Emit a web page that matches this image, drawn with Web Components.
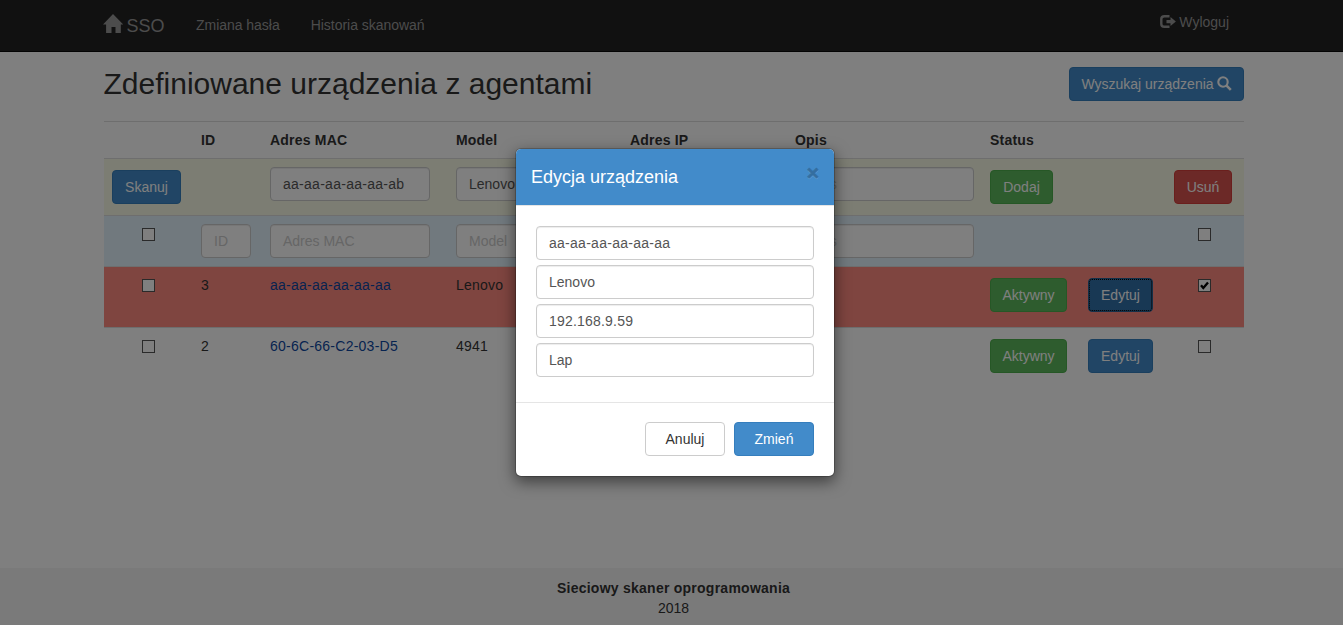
<!DOCTYPE html>
<html lang="pl">
<head>
<meta charset="utf-8">
<title>SSO</title>
<style>
html, body { margin: 0; height: 100%; }
body { background: #fff; overflow: hidden; }
</style>
</head>
<body>
<sso-app></sso-app>
<script>
const define = (name, html) => {
  const t = document.createElement('template');
  t.innerHTML = html;
  customElements.define(name, class extends HTMLElement {
    constructor() {
      super();
      this.attachShadow({ mode: 'open' }).appendChild(t.content.cloneNode(true));
    }
  });
};

define('sso-button', `
<style>
:host { display: flex; box-sizing: border-box; height: 34px; align-items: center; justify-content: center;
  border: 1px solid #357ebd; border-radius: 4px; background: #428bca; color: #fff; font-size: 14px; line-height: 20px; white-space: nowrap; }
:host([kind=success]) { background: #5cb85c; border-color: #4cae4c; }
:host([kind=danger]) { background: #d9534f; border-color: #d43f3a; }
:host([kind=default]) { background: #fff; border-color: #ccc; color: #333; }
:host([focused]) { background: #3071a9; border-color: #285e8e; outline: 1px dotted #000; outline-offset: -2px; }
</style><slot></slot>`);

define('sso-field', `
<style>
:host { display: block; box-sizing: border-box; height: 34px; padding: 6px 12px; border: 1px solid #ccc; border-radius: 4px;
  background: #fff; box-shadow: inset 0 1px 1px rgba(0,0,0,.075); color: #555; font-size: 14px; line-height: 20px;
  white-space: nowrap; overflow: hidden; }
:host([empty]) { color: #ccc; }
:host([mac]) { letter-spacing: .27px; }
:host([ip]) { letter-spacing: .2px; }
</style><slot></slot>`);

define('sso-check', `
<style>
:host { display: block; box-sizing: border-box; width: 13px; height: 13px; border: 1px solid #555; background: #fff; margin-top: 4px; }
svg { display: none; width: 11px; height: 11px; }
:host([checked]) svg { display: block; }
</style><svg viewBox="0 0 11 11"><path d="M2 5.2 4.3 8 9 2.4" fill="none" stroke="#000" stroke-width="2.3"/></svg>`);

define('sso-row', `
<style>
:host { display: grid; box-sizing: border-box; grid-template-columns: 89px 69px 186px 174px 165px 195px 98px 86px 78px;
  border-top: 1px solid #ddd; padding-top: 8px; line-height: 20px; align-items: start; }
:host([kind=head]) { height: 37px; font-weight: bold; letter-spacing: .2px; }
:host([kind=add]) { height: 57px; background: #f9fbe7; }
:host([kind=filter]) { height: 51px; background: #e3f2fd; }
:host([kind=missing]) { height: 61px; background: #ff8a80; }
::slotted(*) { margin-left: 8px; }
::slotted(span) { letter-spacing: .2px; }
::slotted(sso-button) { margin-top: 3px; justify-self: start; }
::slotted(sso-check) { margin-left: 38px; }
::slotted(sso-check.end) { margin-left: 32px; }
::slotted(a) { color: #0d47a1; letter-spacing: .25px; }
</style><slot></slot>`);

define('sso-navbar', `
<style>
:host { display: flex; box-sizing: border-box; height: 52px; background: #222; border-bottom: 1px solid #080808; color: #999; padding: 0 114px 0 103px; }
.brand { display: flex; font-size: 18px; line-height: 20px; padding-top: 14px; width: 93px; }
.brand svg { width: 20px; height: 20px; margin-right: 3.500px; }
.brand span { padding-top: 2px; }
.link { padding-top: 15px; margin-right: 31px; line-height: 20px; letter-spacing: -.03px; }
.out { margin-left: auto; padding-top: 12px; display: flex; line-height: 20px; }
.out svg { width: 16px; height: 14px; margin: 3px 3px 0 0; }
</style>
<div class="brand"><svg viewBox="0 0 20 20"><path fill="#999" d="M10 0 0 10.500h3.100V19h5.400v-6h4v6h5.300v-8.500H20.200z"/></svg><span>SSO</span></div>
<div class="link">Zmiana hasła</div><div class="link">Historia skanowań</div>
<div class="out"><svg viewBox="0 0 16 14"><path d="M9.500 1.200H4.400Q1.300 1.200 1.300 4v5q0 2.800 3.100 2.800h5.100" fill="none" stroke="#999" stroke-width="2.400"/><path fill="#999" d="M6.500 5h4V2L15.900 6.500 10.500 11V8.200h-4z"/></svg><span>Wyloguj</span></div>`);

define('sso-heading', `
<style>
:host { display: flex; justify-content: space-between; height: 69px; box-sizing: border-box; padding-top: 15px; }
h1 { margin: 0 0 0 -.5px; font-size: 30px; line-height: 33px; font-weight: 400; }
sso-button { width: 175px; }
svg { width: 15px; height: 15px; margin: -2px -.5px 0 3.500px; }
</style>
<h1>Zdefiniowane urządzenia z agentami</h1>
<sso-button>Wyszukaj urządzenia<svg viewBox="0 0 15 15"><circle cx="6" cy="6" r="4.700" fill="none" stroke="#fff" stroke-width="2.100"/><path d="M9.300 9.300l4.500 4.500" stroke="#fff" stroke-width="2.600"/></svg></sso-button>`);

define('sso-devices', `
<style>
:host { display: block; }
</style>
<sso-row kind="head"><i></i><span>ID</span><span>Adres MAC</span><span>Model</span><span>Adres IP</span><span>Opis</span><span>Status</span></sso-row>
<sso-row kind="add">
<sso-button style="width:69px">Skanuj</sso-button><i></i>
<sso-field mac style="width:160px">aa-aa-aa-aa-aa-ab</sso-field><sso-field style="width:148px">Lenovo</sso-field>
<sso-field empty style="width:139px"></sso-field><sso-field empty style="width:179px">Opis</sso-field>
<sso-button kind="success" style="width:63px">Dodaj</sso-button><i></i><sso-button kind="danger" style="width:58px">Usuń</sso-button>
</sso-row>
<sso-row kind="filter">
<sso-check></sso-check><sso-field empty style="width:50px">ID</sso-field>
<sso-field empty style="width:160px">Adres MAC</sso-field><sso-field empty style="width:148px">Model</sso-field>
<sso-field empty style="width:139px"></sso-field><sso-field empty style="width:179px">Opis</sso-field>
<i></i><i></i><sso-check class="end"></sso-check>
</sso-row>
<sso-row kind="missing">
<sso-check></sso-check><span>3</span><a>aa-aa-aa-aa-aa-aa</a><span>Lenovo</span><i></i><i></i>
<sso-button kind="success" style="width:77px">Aktywny</sso-button><sso-button focused style="width:65px">Edytuj</sso-button><sso-check class="end" checked></sso-check>
</sso-row>
<sso-row>
<sso-check></sso-check><span>2</span><a>60-6C-66-C2-03-D5</a><span>4941</span><i></i><i></i>
<sso-button kind="success" style="width:77px">Aktywny</sso-button><sso-button style="width:65px">Edytuj</sso-button><sso-check class="end"></sso-check>
</sso-row>`);

define('sso-footer', `
<style>
:host { display: block; box-sizing: border-box; height: 57px; padding: 10px 0 0 4px; background: #f5f5f5; text-align: center; line-height: 20px; }
b { display: block; letter-spacing: .25px; }
</style><b>Sieciowy skaner oprogramowania</b><span>2018</span>`);

define('sso-modal', `
<style>
:host { display: block; box-sizing: border-box; width: 320px; height: 329px; border: 1px solid rgba(0,0,0,.2); border-radius: 6px;
  background: #fff; background-clip: padding-box; box-shadow: 0 5px 15px rgba(0,0,0,.5); }
header { display: flex; justify-content: space-between; box-sizing: border-box; height: 57px; padding: 15px; background: #428bca;
  border-bottom: 1px solid #e5e5e5; border-radius: 5px 5px 0 0; color: #fff; font-size: 18px; line-height: 26px; background-clip: padding-box; }
.close { font-size: 21px; line-height: 21px; margin-top: -2px; font-weight: bold; color: #000; opacity: .2; text-shadow: 0 1px 0 #fff; -webkit-text-stroke: .7px #000; }
.body { display: grid; gap: 5px; padding: 20px 20px 25px; }
footer { display: flex; justify-content: flex-end; gap: 9px; padding: 19px 20px 20px; border-top: 1px solid #e5e5e5; }
sso-button { width: 80px; }
</style>
<header><span>Edycja urządzenia</span><span class="close">×</span></header>
<div class="body"><sso-field mac>aa-aa-aa-aa-aa-aa</sso-field><sso-field>Lenovo</sso-field><sso-field ip>192.168.9.59</sso-field><sso-field>Lap</sso-field></div>
<footer><sso-button kind="default">Anuluj</sso-button><sso-button>Zmień</sso-button></footer>`);

define('sso-app', `
<style>
:host { display: grid; height: 625px; font: 14px/20px "Liberation Sans", Arial, sans-serif; color: #333; }
.page { grid-area: 1/1; display: flex; flex-direction: column; }
main { flex: 1; width: 1140px; margin-left: 104px; }
.backdrop { grid-area: 1/1; z-index: 1; display: flex; justify-content: center; align-items: flex-start; box-sizing: border-box;
  padding: 148px 0 0 7px; background: rgba(0,0,0,.5); }
</style>
<div class="page"><sso-navbar></sso-navbar><main><sso-heading></sso-heading><sso-devices></sso-devices></main><sso-footer></sso-footer></div>
<div class="backdrop"><sso-modal></sso-modal></div>`);
</script>
</body>
</html>
